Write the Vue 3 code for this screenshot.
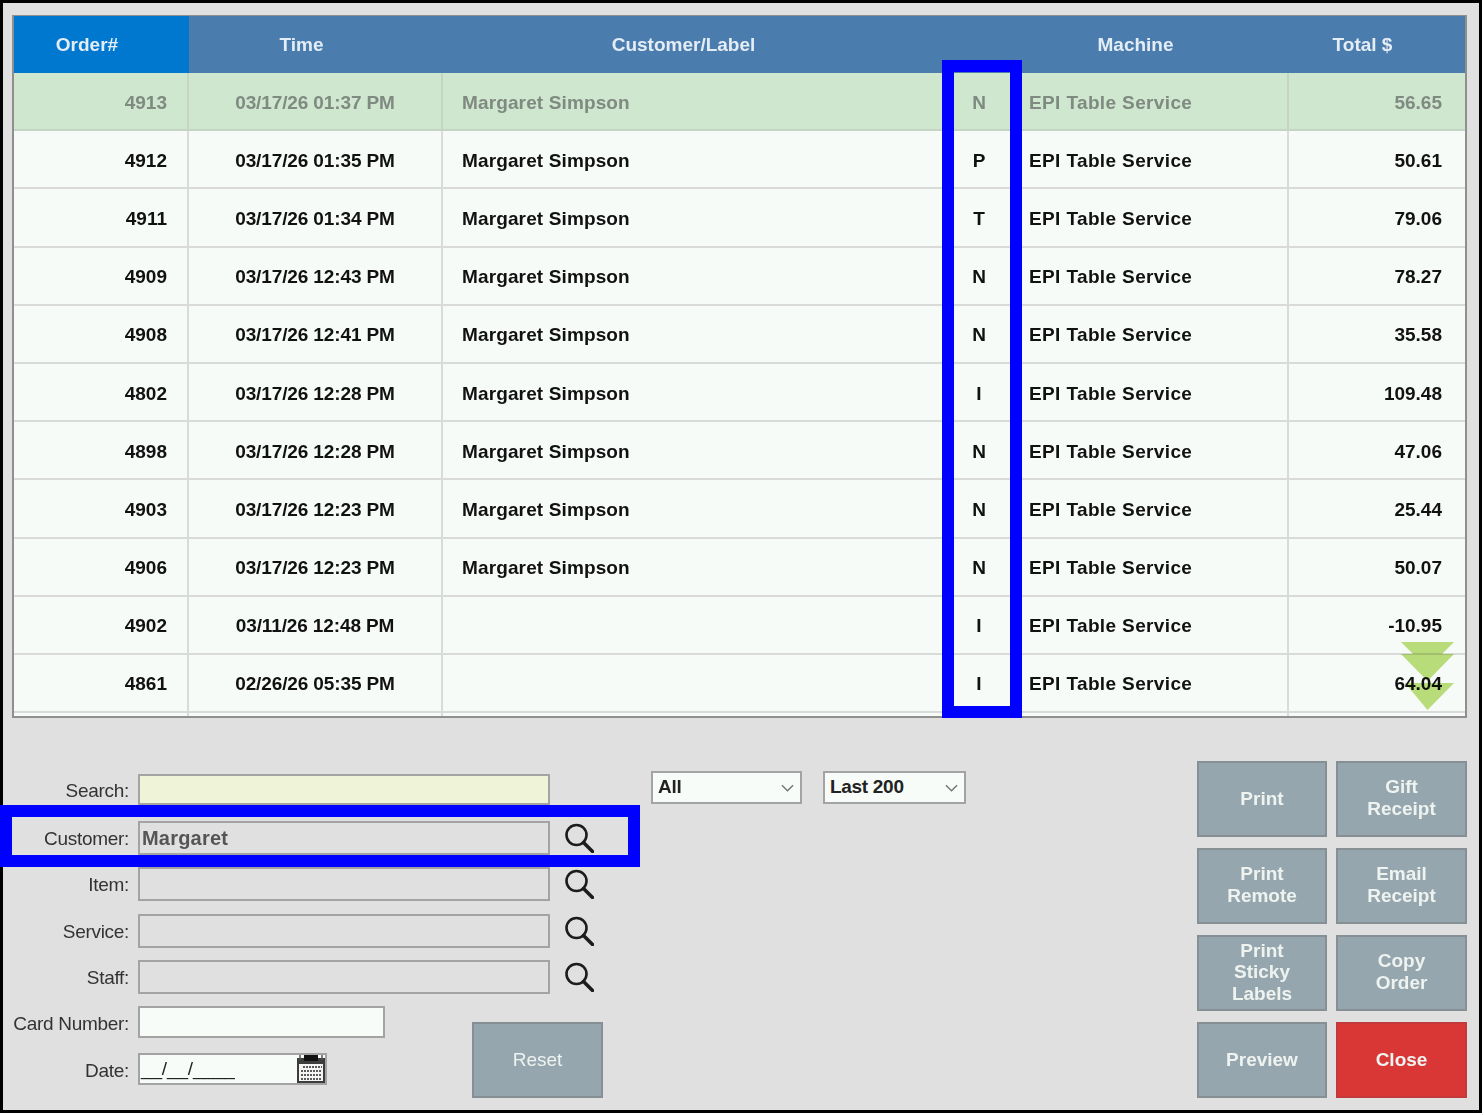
<script setup>
const headers = ['Order#', 'Time', 'Customer/Label', '', 'Machine', 'Total $']
const m = 'Margaret Simpson'
const rows = [
  ['4913', '03/17/26 01:37 PM', m, 'N', '56.65'],
  ['4912', '03/17/26 01:35 PM', m, 'P', '50.61'],
  ['4911', '03/17/26 01:34 PM', m, 'T', '79.06'],
  ['4909', '03/17/26 12:43 PM', m, 'N', '78.27'],
  ['4908', '03/17/26 12:41 PM', m, 'N', '35.58'],
  ['4802', '03/17/26 12:28 PM', m, 'I', '109.48'],
  ['4898', '03/17/26 12:28 PM', m, 'N', '47.06'],
  ['4903', '03/17/26 12:23 PM', m, 'N', '25.44'],
  ['4906', '03/17/26 12:23 PM', m, 'N', '50.07'],
  ['4902', '03/11/26 12:48 PM', '', 'I', '-10.95'],
  ['4861', '02/26/26 05:35 PM', '', 'I', '64.04'],
  ['', '', '', '', '']
]
const fields = [
  { label: 'Customer:', value: 'Margaret' },
  { label: 'Item:', value: '' },
  { label: 'Service:', value: '' },
  { label: 'Staff:', value: '' }
]
const buttons = [
  { lines: ['Print'] },
  { lines: ['Gift', 'Receipt'] },
  { lines: ['Print', 'Remote'] },
  { lines: ['Email', 'Receipt'] },
  { lines: ['Print', 'Sticky', 'Labels'] },
  { lines: ['Copy', 'Order'] },
  { lines: ['Preview'] },
  { lines: ['Close'], danger: true }
]
const selects = ['All', 'Last 200']
</script>

<template>
  <div class="frame">
    <div class="table">
      <div class="grid head">
        <div v-for="(h, i) in headers" :key="i" class="hcell" :class="{ active: i === 0 }">{{ h }}</div>
      </div>
      <div v-for="(r, i) in rows" :key="i" class="grid row" :class="{ sel: i === 0 }">
        <div class="cell right order">{{ r[0] }}</div>
        <div class="cell center time">{{ r[1] }}</div>
        <div class="cell left name">{{ r[2] }}</div>
        <div class="cell center type">{{ r[3] }}</div>
        <div class="cell left machine">{{ r[0] ? 'EPI Table Service' : '' }}</div>
        <div class="cell right total">{{ r[4] }}</div>
      </div>
    </div>

    <div class="panel">
      <div class="form">
        <div class="frow searchrow">
          <span class="label">Search:</span>
          <div class="input search"></div>
        </div>
        <div v-for="f in fields" :key="f.label" class="frow">
          <span class="label">{{ f.label }}</span>
          <div class="input">{{ f.value }}</div>
          <svg class="lens" viewBox="0 0 30 30" width="30" height="30">
            <circle cx="12.5" cy="12" r="10" fill="none" stroke="#1c1c1c" stroke-width="2.6" />
            <path d="M19.5 19.5 L28.5 28.5" stroke="#1c1c1c" stroke-width="3.6" stroke-linecap="round" />
          </svg>
        </div>
        <div class="lower">
          <div class="lowerfields">
            <div class="frow">
              <span class="label">Card Number:</span>
              <div class="input light card"></div>
            </div>
            <div class="frow">
              <span class="label">Date:</span>
              <div class="input light date">
                <span class="mask">__/__/____</span>
                <svg class="cal" viewBox="0 0 28 28" width="28" height="28">
                  <rect x="0" y="3" width="28" height="25" fill="#3c3c3c" />
                  <rect x="7" y="0" width="14" height="6" fill="#111" />
                  <rect x="2" y="9" width="24" height="17" fill="#f4f4f4" />
                  <path d="M6 12h19M4 16h21M4 20h21M4 24h21" stroke="#5a5a5a" stroke-width="2" stroke-dasharray="2 1" />
                  <path d="M3 0v5M25 0v5" stroke="#555" stroke-width="1.500" />
                </svg>
              </div>
            </div>
          </div>
          <div class="btn reset">Reset</div>
        </div>
      </div>

      <div class="selects">
        <div v-for="s in selects" :key="s" class="select">
          <span>{{ s }}</span>
          <svg viewBox="0 0 14 8" width="13" height="8">
            <path d="M1 1 L7 7 L13 1" fill="none" stroke="#777" stroke-width="1.600" />
          </svg>
        </div>
      </div>

      <div class="buttons">
        <div v-for="(b, i) in buttons" :key="i" class="btn" :class="{ danger: b.danger, multi: b.lines.length > 1 }">
          <span v-for="l in b.lines" :key="l">{{ l }}</span>
        </div>
      </div>
    </div>

    <svg class="arrows" viewBox="0 0 53 68" width="53" height="68">
      <path d="M0 0H53L41 12H53L26.500 39L0 12H12ZM4 41H53L26.500 68Z" fill="#bfe07e" />
    </svg>
    <div class="mark typemark"></div>
    <div class="mark custmark"></div>
  </div>
</template>

<style>
html, body { margin: 0; background: #fff; }
</style>

<style scoped>
.frame {
  position: relative;
  box-sizing: border-box;
  width: 1482px;
  height: 1113px;
  border: 3px solid #000;
  background: #e0e0e0;
  font-family: "Liberation Sans", Arial, sans-serif;
  font-size: 19px;
  color: #111;
}
.table {
  box-sizing: border-box;
  width: 1455px;
  height: 703px;
  margin: 12px 0 0 9px;
  border: 2px solid #8f8f8f;
  border-top-width: 1px;
  background: #f7fbf8;
  overflow: hidden;
  filter: blur(.4px);
}
.grid {
  display: grid;
  grid-template-columns: 175px 254px 507px 58px 281px 176px;
}
.head { height: 57px; background: #4a7dae; }
.hcell {
  display: flex;
  align-items: center;
  justify-content: center;
  padding-right: 29px;
  color: #e4edf5;
  font-weight: 700;
}
.hcell:nth-child(3), .hcell:nth-child(5) { padding-right: 26px; }
.active { background: #0078d0; }
.row {
  box-sizing: border-box;
  height: 58.200px;
  border-bottom: 2px solid #dadada;
  font-weight: 700;
}
.sel { background: #cfe6cf; color: #7f8a80; border-bottom-color: #c6d4c6; }
.cell {
  display: flex;
  align-items: center;
  border-right: 2px solid #dadada;
  white-space: nowrap;
  padding-top: 3px;
}
.sel .cell { border-right-color: #c6d4c6; }
.right { justify-content: flex-end; }
.center { justify-content: center; }
.left { padding-left: 19px; }
.order { padding-right: 20px; }
.time { letter-spacing: -.12px; }
.name { letter-spacing: .13px; border-right: 0; }
.machine { padding-left: 21px; letter-spacing: .37px; }
.total { padding-right: 23px; border-right: 0; }
.type { border-right: 0; }
.panel { display: flex; align-items: flex-start; filter: blur(.4px); }
.form { width: 648px; margin-top: 46px; flex: none; }
.frow { display: flex; align-items: center; height: 46.400px; }
.searchrow { height: 50.600px; }
.label {
  flex: none;
  box-sizing: border-box;
  width: 135px;
  padding: 2px 9px 0 0;
  text-align: right;
  color: #333;
  letter-spacing: -.3px;
  white-space: nowrap;
}
.searchrow .label, .lowerfields .label { padding-top: 4px; }
.input {
  box-sizing: border-box;
  flex: none;
  width: 412px;
  height: 34px;
  border: 2px solid #a3a3a3;
  padding-left: 2px;
  font-size: 20px;
  font-weight: 700;
  letter-spacing: .2px;
  line-height: 30px;
  color: #555;
}
.search { height: 31px; background: #eff3d8; }
.light { background: #f7fcf8; height: 32px; }
.card { width: 247px; }
.date {
  width: 189px;
  display: flex;
  align-items: center;
  justify-content: space-between;
  padding: 0 0 0 1px;
  font-size: 19px;
  font-weight: 400;
  letter-spacing: -.15px;
  color: #222;
}
.mask { line-height: 28px; }
.lens { margin-left: 14px; flex: none; }
.lower { display: flex; align-items: flex-start; margin-top: -1px; }
.lowerfields { width: 469px; flex: none; }
.selects { display: flex; gap: 21px; margin-top: 53px; flex: none; }
.select {
  box-sizing: border-box;
  width: 151px;
  height: 33px;
  display: flex;
  align-items: center;
  justify-content: space-between;
  padding: 0 6px 2px 5px;
  border: 2px solid #a3a3a3;
  background: #f7fcf8;
  font-weight: 700;
  letter-spacing: -.3px;
  color: #222;
}
.select svg { margin-top: 2px; }
.select + .select { width: 143px; }
.buttons {
  display: grid;
  grid-template-columns: 130px 131px;
  grid-auto-rows: 75.500px;
  column-gap: 9px;
  row-gap: 11.600px;
  margin: 43px 0 0 auto;
  padding-right: 12px;
  flex: none;
}
.btn {
  box-sizing: border-box;
  display: flex;
  flex-direction: column;
  align-items: center;
  justify-content: center;
  border: 2px solid #858f94;
  background: #96a6af;
  color: #eef3f0;
  font-weight: 700;
  line-height: 21.500px;
}
.multi { padding-bottom: 2px; }
.reset { width: 131px; height: 76px; margin-top: 23px; font-weight: 400; }
.danger { background: #d93636; border-color: #c43a3a; }
.mark {
  position: absolute;
  box-sizing: border-box;
  border: 12px solid #0000ff;
}
.typemark { left: 939px; top: 57px; width: 80px; height: 658px; }
.custmark { left: -3px; top: 802px; width: 640px; height: 62px; }
.arrows { position: absolute; left: 1398px; top: 639px; mix-blend-mode: multiply; }
</style>
